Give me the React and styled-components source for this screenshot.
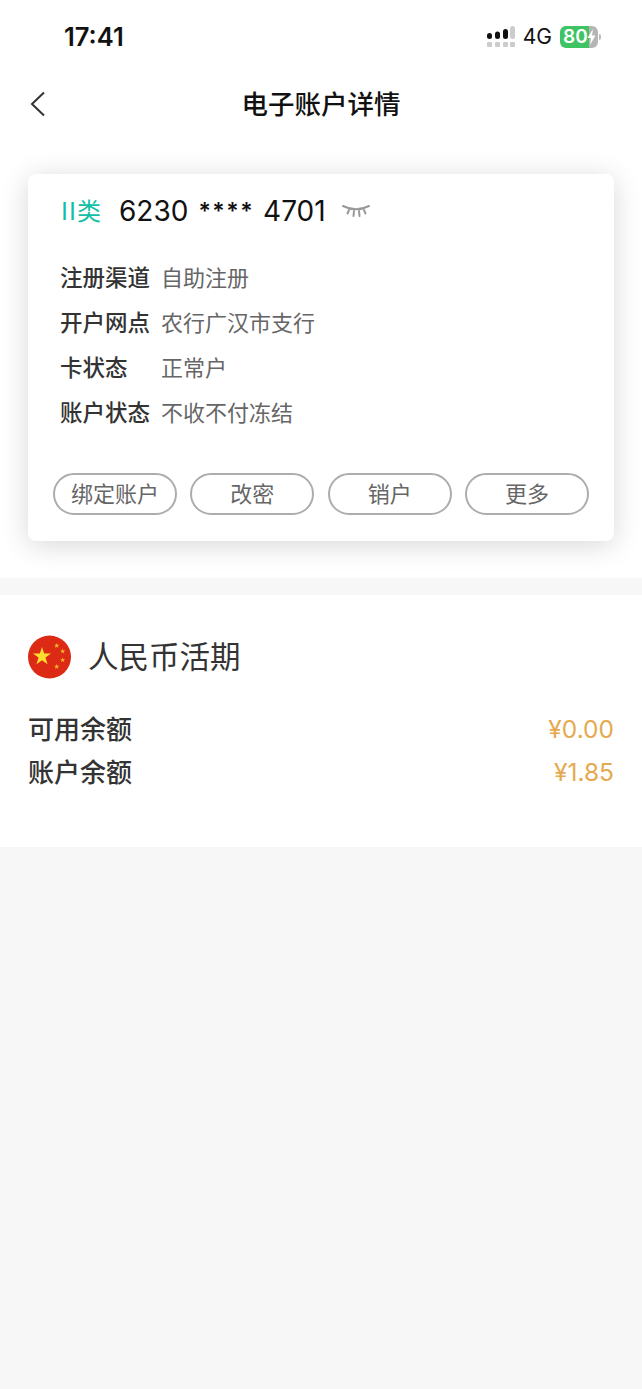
import React from 'react'
import styled, { createGlobalStyle } from 'styled-components'

const Global = createGlobalStyle`
  html, body {
    margin: 0;
    padding: 0;
    background: #f7f7f7;
    font-family: "Liberation Sans", "Noto Sans CJK SC", sans-serif;
  }
`

const Page = styled.div`
  width: 642px;
  height: 1389px;
  overflow: hidden;
  background: #f7f7f7;
`

const Top = styled.div`
  background: #fff;
  height: 578px;
`

const StatusBar = styled.div`
  height: 73px;
  display: flex;
  align-items: center;
  justify-content: space-between;
  padding: 0 44px 0 64px;
`

const Time = styled.div`
  font-family: "Inter", "Liberation Sans", sans-serif;
  font-size: 25.5px;
  font-weight: 600;
  color: #111;
`

const StatusRight = styled.div`
  display: flex;
  align-items: center;
  gap: 8px;
`

const Net = styled.div`
  font-size: 21px;
  color: #111;
  font-family: "Inter", "Liberation Sans", sans-serif;
`

const Battery = styled.div`
  position: relative;
  width: 38px;
  height: 22px;
  border-radius: 6px;
  background: linear-gradient(to right, #3fc463 76%, #b5b5b5 76%);
  color: #fff;
  font-family: "Inter", "Liberation Sans", sans-serif;
  font-size: 19px;
  font-weight: 600;
  line-height: 22px;
  padding-left: 3px;
  box-sizing: border-box;
  white-space: nowrap;
`

const Bolt = styled.svg`
  position: absolute;
  left: 27px;
  top: 3px;
`

const Nub = styled.div`
  position: absolute;
  right: -3px;
  top: 8px;
  width: 2px;
  height: 6px;
  border-radius: 0 2px 2px 0;
  background: #bbb;
`

const NavBar = styled.div`
  height: 62px;
  display: flex;
  align-items: center;
  justify-content: center;
  position: relative;
`

const Back = styled.svg`
  position: absolute;
  left: 29px;
  top: 18px;
`

const Title = styled.div`
  font-size: 26.5px;
  font-weight: 500;
  color: #111;
  padding-bottom: 4px;
`

const Card = styled.div`
  margin: 39px 28px 0;
  height: 367px;
  background: #fff;
  border-radius: 8px;
  box-shadow: 0 4px 28px rgba(0, 0, 0, 0.16);
  box-sizing: border-box;
  padding: 18px 25px 0 32px;
`

const CardHead = styled.div`
  display: flex;
  align-items: center;
  height: 38px;
`

const Kind = styled.div`
  font-size: 24px;
  color: #12bfa6;
  width: 59px;
  padding-bottom: 4px;
  white-space: nowrap;
`

const KindMark = styled.span`
  font-size: 25px;
  font-weight: 500;
  letter-spacing: 1px;
  margin-left: 1px;
`

const CardNumber = styled.div`
  display: flex;
  align-items: center;
  font-family: "Inter", "Liberation Sans", sans-serif;
  font-size: 28px;
  color: #111;
  white-space: nowrap;
`

const Mask = styled.span`
  font-size: 23px;
  font-weight: 600;
  letter-spacing: 1.5px;
  margin: 0 9px 0 10px;
`

const Eye = styled.svg`
  margin-left: 16px;
`

const InfoList = styled.div`
  margin-top: 23px;
  display: flex;
  flex-direction: column;
`

const InfoRow = styled.div`
  display: flex;
  align-items: center;
  height: 45px;
  font-size: 22px;
`

const InfoLabel = styled.div`
  width: 101px;
  font-size: 22.5px;
  font-weight: 500;
  color: #333;
  white-space: nowrap;
`

const InfoValue = styled.div`
  color: #666;
`

const Actions = styled.div`
  display: flex;
  justify-content: space-between;
  margin: 40px 0 0 -7px;
`

const Pill = styled.button`
  width: 124px;
  height: 42px;
  box-sizing: border-box;
  padding: 0 0 4px;
  background: #fff;
  border: 2px solid #adadad;
  border-radius: 21px;
  color: #666;
  font-family: inherit;
  font-size: 22px;
`

const Balance = styled.div`
  margin-top: 17px;
  height: 252px;
  background: #fff;
  box-sizing: border-box;
  padding: 40px 28px 0;
`

const BalanceHead = styled.div`
  display: flex;
  align-items: center;
  gap: 17px;
  height: 44px;
`

const Currency = styled.div`
  font-size: 30.5px;
  color: #333;
  padding-bottom: 5px;
`

const Rows = styled.div`
  margin-top: 27px;
`

const Row = styled.div`
  display: flex;
  justify-content: space-between;
  align-items: center;
  height: 43px;
`

const RowLabel = styled.div`
  font-size: 26px;
  font-weight: 500;
  color: #333;
`

const Amount = styled.div`
  font-family: "Inter", "Liberation Sans", sans-serif;
  font-size: 24.5px;
  color: #e5a94f;
  padding-top: 2px;
`

const info = [
  ['注册渠道', '自助注册'],
  ['开户网点', '农行广汉市支行'],
  ['卡状态', '正常户'],
  ['账户状态', '不收不付冻结'],
]

const star = 'M0 -1 L0.2245 -0.309 L0.951 -0.309 L0.363 0.118 L0.588 0.809 L0 0.382 L-0.588 0.809 L-0.363 0.118 L-0.951 -0.309 L-0.2245 -0.309 Z'

const Signal = () => (
  <svg width="30" height="22" viewBox="0 0 30 22">
    <g fill="#111">
      <rect x="2" y="7" width="5" height="6" rx="2.5" />
      <rect x="10" y="5.5" width="5" height="7.5" rx="2.5" />
      <rect x="18" y="3" width="5" height="10" rx="2.5" />
    </g>
    <rect x="25" y="0" width="5" height="13" rx="2.5" fill="#ccc" />
    <g fill="#ccc">
      <rect x="2" y="16" width="5" height="5" rx="1" />
      <rect x="10" y="16" width="5" height="5" rx="1" />
      <rect x="18" y="16" width="5" height="5" rx="1" />
      <rect x="25" y="16" width="5" height="5" rx="1" />
    </g>
  </svg>
)

const Flag = () => (
  <svg width="43" height="44" viewBox="0 0 43 44">
    <circle cx="21.5" cy="22" r="21.5" fill="#dc2a14" />
    <path d={star} transform="translate(14 21.5) scale(9.5)" fill="#fde02f" />
    <path d={star} transform="translate(28.7 10.7) scale(2.8)" fill="#f5b92a" />
    <path d={star} transform="translate(34.7 16.3) scale(2.8)" fill="#f5b92a" />
    <path d={star} transform="translate(34.7 25) scale(2.8)" fill="#f5b92a" />
    <path d={star} transform="translate(28.7 31.7) scale(2.8)" fill="#f5b92a" />
  </svg>
)

const App = () => (
  <Page>
    <Global />
    <Top>
      <StatusBar>
        <Time>17:41</Time>
        <StatusRight>
          <Signal />
          <Net>4G</Net>
          <Battery>
            80
            <Bolt width="9" height="16" viewBox="0 0 9 16">
              <path d="M6 0 L0.5 9 L4 9 L3 16 L8.5 6.5 L5 6.5 Z" fill="#fff" />
            </Bolt>
            <Nub />
          </Battery>
        </StatusRight>
      </StatusBar>
      <NavBar>
        <Back width="18" height="26" viewBox="0 0 18 26">
          <path d="M15 1.5 L3 13 L15 24.5" fill="none" stroke="#333" strokeWidth="2" />
        </Back>
        <Title>电子账户详情</Title>
      </NavBar>
      <Card>
        <CardHead>
          <Kind>
            <KindMark>II</KindMark>类
          </Kind>
          <CardNumber>
            6230<Mask>****</Mask>4701
          </CardNumber>
          <Eye width="28" height="14" viewBox="0 0 28 14">
            <g fill="none" stroke="#999" strokeWidth="2" strokeLinecap="round">
              <path d="M1 2 Q14 8.5 27 2" />
              <path d="M7 6 L5.5 9.5" />
              <path d="M12 7 L11.5 12" />
              <path d="M17 7 L17.5 12" />
              <path d="M22 6 L23.5 9.5" />
            </g>
          </Eye>
        </CardHead>
        <InfoList>
          {info.map(([label, value]) => (
            <InfoRow key={label}>
              <InfoLabel>{label}</InfoLabel>
              <InfoValue>{value}</InfoValue>
            </InfoRow>
          ))}
        </InfoList>
        <Actions>
          {['绑定账户', '改密', '销户', '更多'].map((t) => (
            <Pill key={t}>{t}</Pill>
          ))}
        </Actions>
      </Card>
    </Top>
    <Balance>
      <BalanceHead>
        <Flag />
        <Currency>人民币活期</Currency>
      </BalanceHead>
      <Rows>
        <Row>
          <RowLabel>可用余额</RowLabel>
          <Amount>¥0.00</Amount>
        </Row>
        <Row>
          <RowLabel>账户余额</RowLabel>
          <Amount>¥1.85</Amount>
        </Row>
      </Rows>
    </Balance>
  </Page>
)

export default App
